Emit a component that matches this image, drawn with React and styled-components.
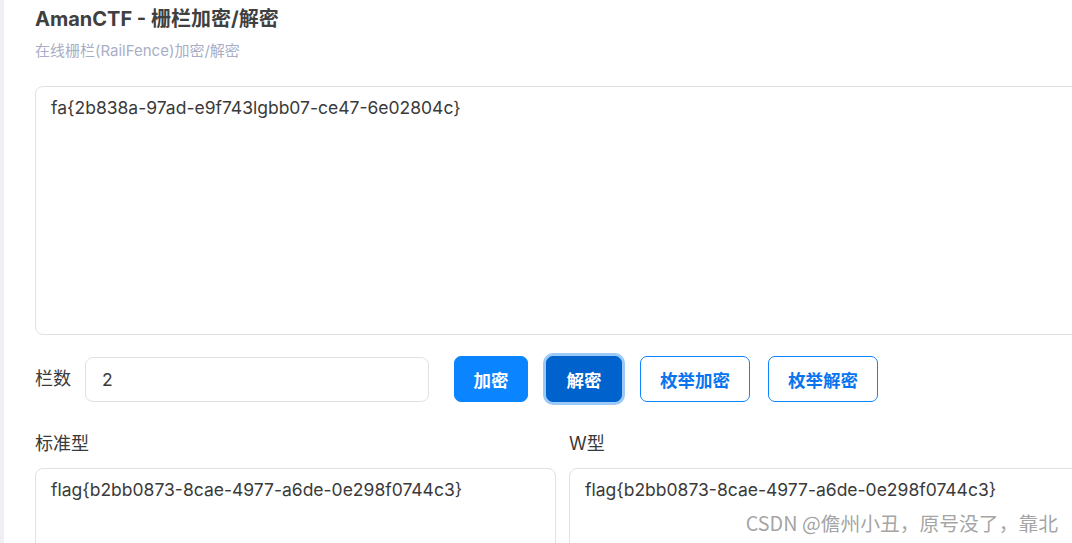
import styled, { createGlobalStyle, css } from 'styled-components';

const GlobalStyle = createGlobalStyle`
  html, body {
    margin: 0;
    padding: 0;
    background: #fff;
    overflow: hidden;
  }
  body {
    font-family: Inter, "Noto Sans CJK SC", sans-serif;
    color: #3a3a3a;
  }
`;

const Page = styled.div`
  display: flex;
  width: 1072px;
  height: 543px;
  overflow: hidden;
  position: relative;
`;

const Strip = styled.div`
  flex: 0 0 4px;
  background: #eef0f3;
`;

const Main = styled.div`
  flex: 0 0 auto;
  width: 1056px;
  padding: 5px 0 0 31px;
  box-sizing: content-box;
`;

const Title = styled.h1`
  margin: 0;
  font-size: 20px;
  line-height: 28px;
  font-weight: 700;
  color: #404040;
`;

const Subtitle = styled.div`
  margin-top: 8px;
  font-size: 15px;
  line-height: 20px;
  color: #a9aec6;
`;

const Area = styled.textarea`
  display: block;
  box-sizing: border-box;
  width: 100%;
  height: ${p => p.$h}px;
  margin: 0;
  padding: 9px 15px;
  border: 1px solid #dfe1e6;
  border-radius: 8px;
  font-family: Inter, "Noto Sans CJK SC", sans-serif;
  font-size: 17.5px;
  line-height: 24px;
  color: #3a3a3a;
  background: #fff;
  outline: none;
  resize: ${p => (p.$resize ? 'vertical' : 'none')};
`;

const InputBlock = styled.div`
  margin-top: 25px;
`;

const Controls = styled.div`
  display: flex;
  align-items: center;
  margin-top: 21px;
  height: 46px;
`;

const Label = styled.label`
  font-size: 18px;
  line-height: 24px;
  color: #3a3a3a;
  margin-right: 14px;
`;

const RailInput = styled.input`
  box-sizing: border-box;
  width: 344px;
  height: 45px;
  padding: 0 16px;
  border: 1px solid #dfe1e6;
  border-radius: 8px;
  font-family: Inter, sans-serif;
  font-size: 17.5px;
  color: #3a3a3a;
  outline: none;
  margin-right: 25px;
`;

const Buttons = styled.div`
  display: flex;
  gap: 18px;
`;

const Button = styled.button`
  box-sizing: border-box;
  height: 46px;
  min-width: ${p => p.$w}px;
  padding: 0 18px;
  border-radius: 7px;
  border: 1px solid #0a84ff;
  background: #0a84ff;
  color: #fff;
  font-family: "Noto Sans CJK SC", sans-serif;
  font-size: 17.5px;
  font-weight: 700;
  cursor: pointer;
  ${p =>
    p.$active &&
    css`
      background: #0062cc;
      border-color: #0062cc;
      box-shadow: 0 0 0 3px #9ccaf7;
    `}
  ${p =>
    p.$outline &&
    css`
      background: #fff;
      color: #0a74f0;
    `}
`;

const Results = styled.div`
  display: grid;
  grid-template-columns: 521px 1fr;
  column-gap: 13px;
  margin-top: 30px;
`;

const Column = styled.div`
  display: flex;
  flex-direction: column;
  gap: 12px;
`;

const ColumnTitle = styled.div`
  font-size: 18px;
  line-height: 24px;
  color: #3a3a3a;
`;

const Watermark = styled.span`
  position: absolute;
  right: 14px;
  bottom: 7px;
  font-family: "Noto Sans CJK SC", sans-serif;
  font-size: 19.8px;
  line-height: 26px;
  color: rgba(140, 140, 140, 0.8);
  pointer-events: none;
`;

const flag = 'flag{b2bb0873-8cae-4977-a6de-0e298f0744c3}';

export default function App() {
  return (
    <Page>
      <GlobalStyle />
      <Strip />
      <Main>
        <Title>AmanCTF - 栅栏加密/解密</Title>
        <Subtitle>在线栅栏(RailFence)加密/解密</Subtitle>
        <InputBlock>
          <Area $h={249} $resize defaultValue="fa{2b838a-97ad-e9f743lgbb07-ce47-6e02804c}" />
        </InputBlock>
        <Controls>
          <Label>栏数</Label>
          <RailInput defaultValue="2" />
          <Buttons>
            <Button $w={74}>加密</Button>
            <Button $w={76} $active>解密</Button>
            <Button $w={110} $outline>枚举加密</Button>
            <Button $w={110} $outline>枚举解密</Button>
          </Buttons>
        </Controls>
        <Results>
          <Column>
            <ColumnTitle>标准型</ColumnTitle>
            <Area $h={120} readOnly value={flag} />
          </Column>
          <Column>
            <ColumnTitle>W型</ColumnTitle>
            <Area $h={120} readOnly value={flag} />
          </Column>
        </Results>
      </Main>
      <Watermark>CSDN @儋州小丑，原号没了，靠北</Watermark>
    </Page>
  );
}
